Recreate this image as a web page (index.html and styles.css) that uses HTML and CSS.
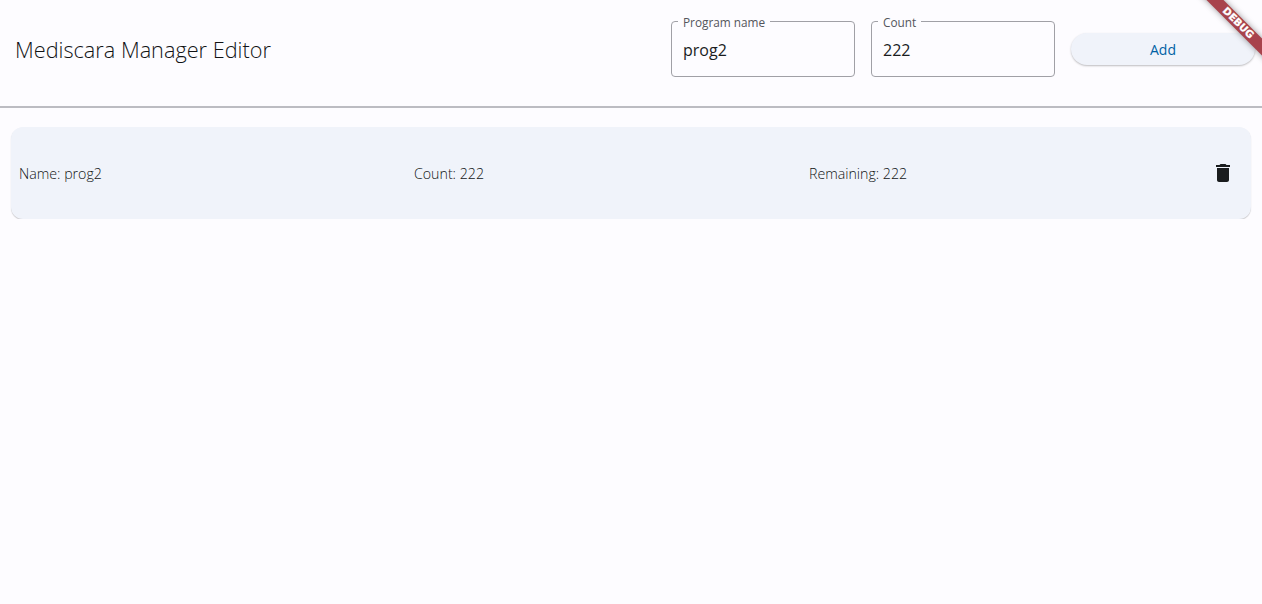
FILE: index.html
```html
<!DOCTYPE html>
<html lang="en">
<head>
  <meta charset="UTF-8">
  <meta name="viewport" content="width=device-width, initial-scale=1.0">
  <title>Mediscara Manager Editor</title>
  <link rel="stylesheet" href="styles.css">
</head>
<body>
  <header class="top-bar">
    <h1 class="title">Mediscara Manager Editor</h1>
    <div class="top-form">
      <div class="field">
        <label class="field-label">Program name</label>
        <input type="text" value="prog2">
      </div>
      <div class="field">
        <label class="field-label">Count</label>
        <input type="text" value="222">
      </div>
      <button class="add-button">Add</button>
    </div>
  </header>

  <main class="program-list">
    <div class="program-card">
      <span class="program-cell">Name: prog2</span>
      <span class="program-cell">Count: 222</span>
      <span class="program-cell">Remaining: 222</span>
      <button class="delete-button" aria-label="Delete">
        <svg width="24" height="24" viewBox="0 0 24 24"><path d="M6 19c0 1.100.9 2 2 2h8c1.100 0 2-.9 2-2V7H6v12zM19 4h-3.500l-1-1h-5l-1 1H5v2h14V4z"/></svg>
      </button>
    </div>
  </main>

  <div class="debug-banner">DEBUG</div>
</body>
</html>
```

FILE: styles.css
```css
body {
  margin: 0;
  background-color: #fdfcff;
  color: #1a1c1e;
  font-family: 'Open Sans', 'Noto Sans', sans-serif;
  overflow: hidden;
}

.top-bar {
  display: flex;
  align-items: center;
  justify-content: space-between;
  height: 106px;
  box-sizing: border-box;
  padding: 0 7px 8px 15px;
  box-shadow: 0 2px 0 #bcbcc2;
}

.title {
  margin: 0;
  font-size: 21.700px;
  font-weight: 300;
  color: #111315;
}

.top-form {
  display: flex;
  align-items: center;
  gap: 16px;
}

.field {
  position: relative;
  width: 184px;
  height: 56px;
  box-sizing: border-box;
  padding: 0 11px;
  display: flex;
  align-items: center;
  border: 1px solid #a0a0a6;
  border-radius: 4px;
}

.field-label {
  position: absolute;
  top: -7px;
  left: 6px;
  padding: 0 5px;
  background-color: #fdfcff;
  font-size: 11.800px;
  line-height: 14px;
  color: #54565c;
}

.field input {
  width: 100%;
  margin-top: 2px;
  padding: 0;
  border: none;
  outline: none;
  background: transparent;
  font-family: inherit;
  font-size: 16px;
  line-height: 22px;
  color: #1a1c1e;
}

.add-button {
  width: 184px;
  height: 32px;
  border: none;
  border-radius: 16px;
  background-color: #f0f3fa;
  box-shadow: 0 1px 2px rgba(0, 0, 0, 0.25);
  color: #0061a4;
  font-family: inherit;
  font-size: 14px;
  font-weight: 500;
}

.program-list {
  padding: 21px 11px 0;
}

.program-card {
  display: flex;
  align-items: center;
  height: 92px;
  padding: 0 16px 0 8px;
  border-radius: 12px;
  background-color: #f0f3fa;
  box-shadow: 0 1px 1px rgba(0, 0, 0, 0.2);
  font-size: 14.200px;
  font-weight: 300;
  color: #111315;
}

.program-cell {
  flex: 0 0 395px;
  padding-top: 1px;
}

.delete-button {
  display: flex;
  margin-left: auto;
  padding: 0;
  border: none;
  background: none;
  fill: #1a1c1e;
}

.debug-banner {
  position: absolute;
  top: 17px;
  right: -36px;
  width: 120px;
  height: 12px;
  line-height: 12px;
  background-color: #a8434c;
  box-shadow: 0 0 6px rgba(0, 0, 0, 0.4);
  color: #fff;
  font-family: 'DejaVu Sans', sans-serif;
  font-size: 10px;
  font-weight: 700;
  -webkit-text-stroke: 0.3px #fff;
  text-align: center;
  transform: rotate(45deg);
}
```
